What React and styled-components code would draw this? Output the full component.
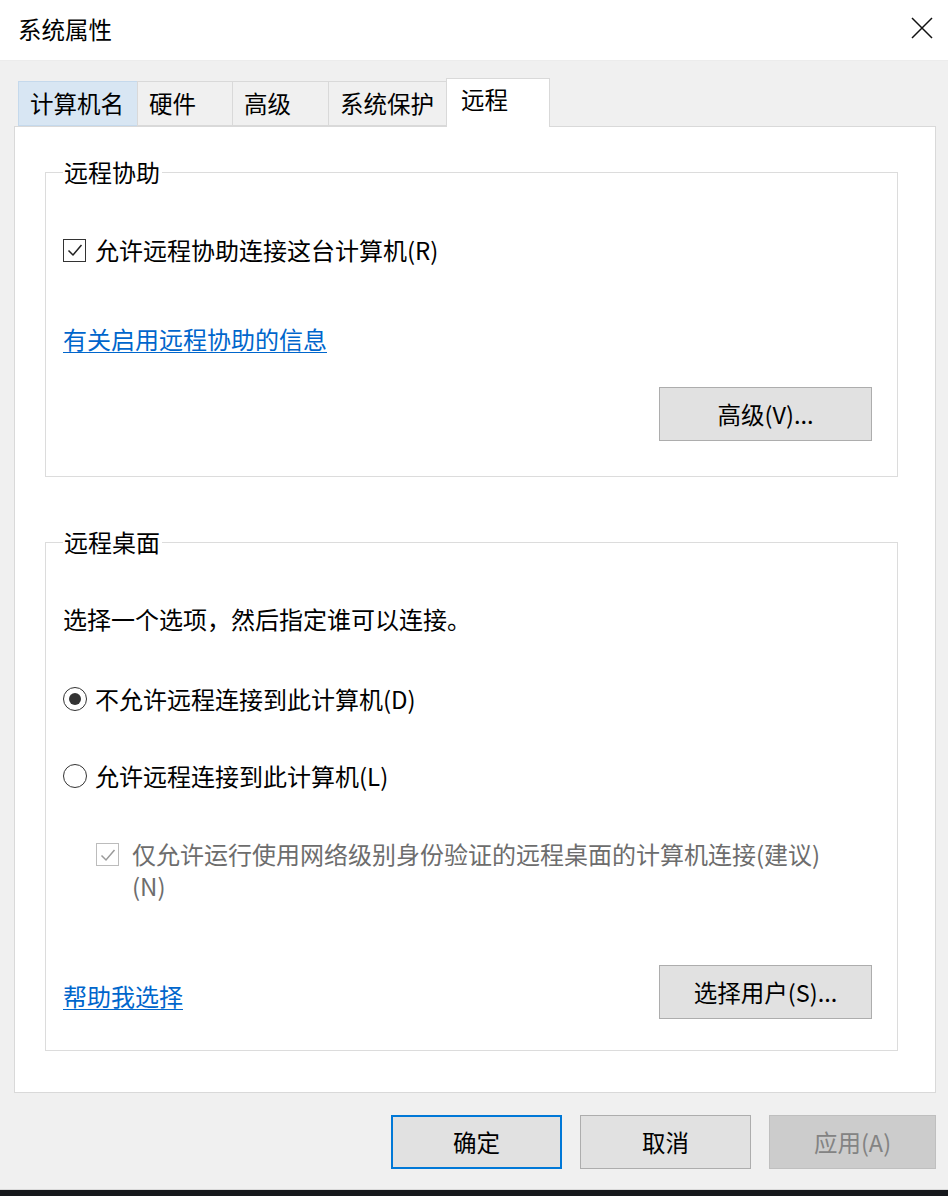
import React from "react";
import styled, { createGlobalStyle } from "styled-components";

const Global = createGlobalStyle`
  html, body { margin: 0; padding: 0; }
  body {
    background: #f0f0f0;
    font-family: "Microsoft YaHei", "Noto Sans CJK SC", "Noto Sans", sans-serif;
    color: #000;
  }
`;

const Window = styled.div`
  width: 948px;
  height: 1196px;
  display: flex;
  flex-direction: column;
  background: #f0f0f0;
  font-size: 24px;
  line-height: 32px;
`;

const TitleBar = styled.div`
  height: 61px;
  flex: none;
  background: #ffffff;
  display: flex;
  align-items: center;
  justify-content: space-between;
  padding: 0 12px 0 18px;
  box-sizing: border-box;
  border-bottom: 1px solid #ececec;
`;

const Title = styled.div`
  font-size: 23.5px;
  margin-top: -2px;
`;

const CloseBtn = styled.div`
  width: 28px;
  height: 28px;
  display: flex;
  align-items: center;
  justify-content: center;
  margin-top: -4px;
`;

const Body = styled.div`
  padding: 0 12px 0 14px;
  display: flex;
  flex-direction: column;
`;

const TabStrip = styled.div`
  margin-top: 17px;
  height: 48px;
  display: flex;
  align-items: flex-end;
  padding-left: 5px;
`;

const Tab = styled.div`
  box-sizing: border-box;
  width: ${(p) => p.$w}px;
  height: ${(p) => (p.$active ? 49 : 45)}px;
  margin-bottom: ${(p) => (p.$active ? -1 : 0)}px;
  margin-left: -1px;
  position: relative;
  z-index: ${(p) => (p.$active ? 2 : 1)};
  border: 1px solid #d9d9d9;
  border-bottom: ${(p) => (p.$active ? "none" : "1px solid #d9d9d9")};
  background: ${(p) => (p.$active ? "#ffffff" : p.$hover ? "#d8e6f3" : "#f0f0f0")};
  border-color: ${(p) => (p.$hover ? "#c5d9ec" : "#d9d9d9")};
  padding: ${(p) => (p.$active ? "4px 0 0 14px" : "5px 0 0 11px")};
  font-size: 23.5px;
  white-space: nowrap;
`;

const Panel = styled.div`
  box-sizing: border-box;
  width: 922px;
  height: 967px;
  background: #ffffff;
  border: 1px solid #d9d9d9;
  padding: 29px 37px 0 30px;
  display: flex;
  flex-direction: column;
  position: relative;
  z-index: 1;
`;

const Group = styled.fieldset`
  margin: ${(p) => p.$mt || 0}px 0 0 0;
  padding: ${(p) => p.$pt}px 25px ${(p) => p.$pb}px 17px;
  border: 1px solid #dcdcdc;
  min-width: 0;
`;

const Legend = styled.legend`
  padding: 0 2px 0 1px;
  font-size: 24px;
  line-height: 32px;
`;

const Column = styled.div`
  display: flex;
  flex-direction: column;
  align-items: flex-start;
`;

const Row = styled.div`
  display: flex;
  align-items: ${(p) => (p.$top ? "flex-start" : "center")};
  margin-top: ${(p) => p.$mt || 0}px;
  padding-left: ${(p) => p.$indent || 0}px;
  color: ${(p) => (p.$disabled ? "#6d6d6d" : "#000")};
`;

const Text = styled.div`
  margin-top: ${(p) => p.$mt || 0}px;
`;

const Label = styled.span`
  margin-left: ${(p) => p.$gap || 8}px;
  max-width: ${(p) => p.$max || "none"};
`;

const Link = styled.a`
  color: #0066cc;
  text-decoration: underline;
  text-underline-offset: 3px;
  text-decoration-thickness: 1px;
  margin-top: ${(p) => p.$mt || 0}px;
  cursor: pointer;
`;

const BoxIcon = styled.span`
  width: 23px;
  height: 23px;
  flex: none;
  box-sizing: border-box;
  border: 1px solid ${(p) => (p.$disabled ? "#bcbcbc" : "#333")};
  background: #fff;
  display: flex;
  align-items: center;
  justify-content: center;
  margin-top: ${(p) => (p.$top ? 5 : 0)}px;
`;

const RadioIcon = styled.span`
  width: 24px;
  height: 24px;
  flex: none;
  box-sizing: border-box;
  border: 1.5px solid #333;
  border-radius: 50%;
  display: flex;
  align-items: center;
  justify-content: center;
  &::after {
    content: "";
    width: 12px;
    height: 12px;
    border-radius: 50%;
    background: ${(p) => (p.$checked ? "#333" : "transparent")};
  }
`;

const ButtonRow = styled.div`
  display: flex;
  align-self: stretch;
  align-items: center;
  justify-content: ${(p) => (p.$split ? "space-between" : "flex-end")};
  margin-top: ${(p) => p.$mt || 0}px;
`;

const Button = styled.div`
  box-sizing: border-box;
  width: ${(p) => p.$w || 213}px;
  height: 54px;
  display: flex;
  align-items: center;
  justify-content: center;
  background: ${(p) => (p.$disabled ? "#cccccc" : "#e1e1e1")};
  border: ${(p) =>
    p.$primary ? "2px solid #0078d7" : p.$disabled ? "1px solid #bfbfbf" : "1px solid #adadad"};
  color: ${(p) => (p.$disabled ? "#838383" : "#000")};
  font-size: 23.5px;
`;

const Footer = styled.div`
  display: flex;
  justify-content: flex-end;
  gap: 18px;
  margin-top: 22px;
  width: 922px;
`;

const Taskbar = styled.div`
  margin-top: auto;
  height: 6px;
  background: #16181c;
  border-top: 1px solid #d8d8d8;
`;

const Check = ({ color = "#222" }) => (
  <svg width="18" height="18" viewBox="0 0 18 18">
    <path d="M2.5 9.5 L7 14 L15.5 4" fill="none" stroke={color} strokeWidth="1.5" />
  </svg>
);

export default function App() {
  return (
    <Window>
      <Global />
      <TitleBar>
        <Title>系统属性</Title>
        <CloseBtn>
          <svg width="22" height="22" viewBox="0 0 22 22">
            <path d="M1 1 L21 21 M21 1 L1 21" stroke="#111" strokeWidth="1.5" />
          </svg>
        </CloseBtn>
      </TitleBar>
      <Body>
        <TabStrip>
          <Tab $w={120} $hover>计算机名</Tab>
          <Tab $w={96}>硬件</Tab>
          <Tab $w={97}>高级</Tab>
          <Tab $w={119}>系统保护</Tab>
          <Tab $w={104} $active>远程</Tab>
        </TabStrip>
        <Panel>
          <Group $pt={46} $pb={35}>
            <Legend>远程协助</Legend>
            <Column>
              <Row>
                <BoxIcon>
                  <Check />
                </BoxIcon>
                <Label $gap={9}>允许远程协助连接这台计算机(R)</Label>
              </Row>
              <Link $mt={57}>有关启用远程协助的信息</Link>
              <ButtonRow $mt={32}>
                <Button>高级(V)...</Button>
              </ButtonRow>
            </Column>
          </Group>
          <Group $mt={49} $pt={45} $pb={31}>
            <Legend>远程桌面</Legend>
            <Column>
              <Text>选择一个选项，然后指定谁可以连接。</Text>
              <Row $mt={48}>
                <RadioIcon $checked />
                <Label>不允许远程连接到此计算机(D)</Label>
              </Row>
              <Row $mt={45}>
                <RadioIcon />
                <Label>允许远程连接到此计算机(L)</Label>
              </Row>
              <Row $mt={46} $indent={33} $top $disabled>
                <BoxIcon $disabled $top>
                  <Check color="#9a9a9a" />
                </BoxIcon>
                <Label $gap={13} $max="700px">
                  仅允许运行使用网络级别身份验证的远程桌面的计算机连接(建议)(N)
                </Label>
              </Row>
              <ButtonRow $mt={63} $split>
                <Link $mt={8}>帮助我选择</Link>
                <Button>选择用户(S)...</Button>
              </ButtonRow>
            </Column>
          </Group>
        </Panel>
        <Footer>
          <Button $w={171} $primary>确定</Button>
          <Button $w={171}>取消</Button>
          <Button $w={167} $disabled>应用(A)</Button>
        </Footer>
      </Body>
      <Taskbar />
    </Window>
  );
}
